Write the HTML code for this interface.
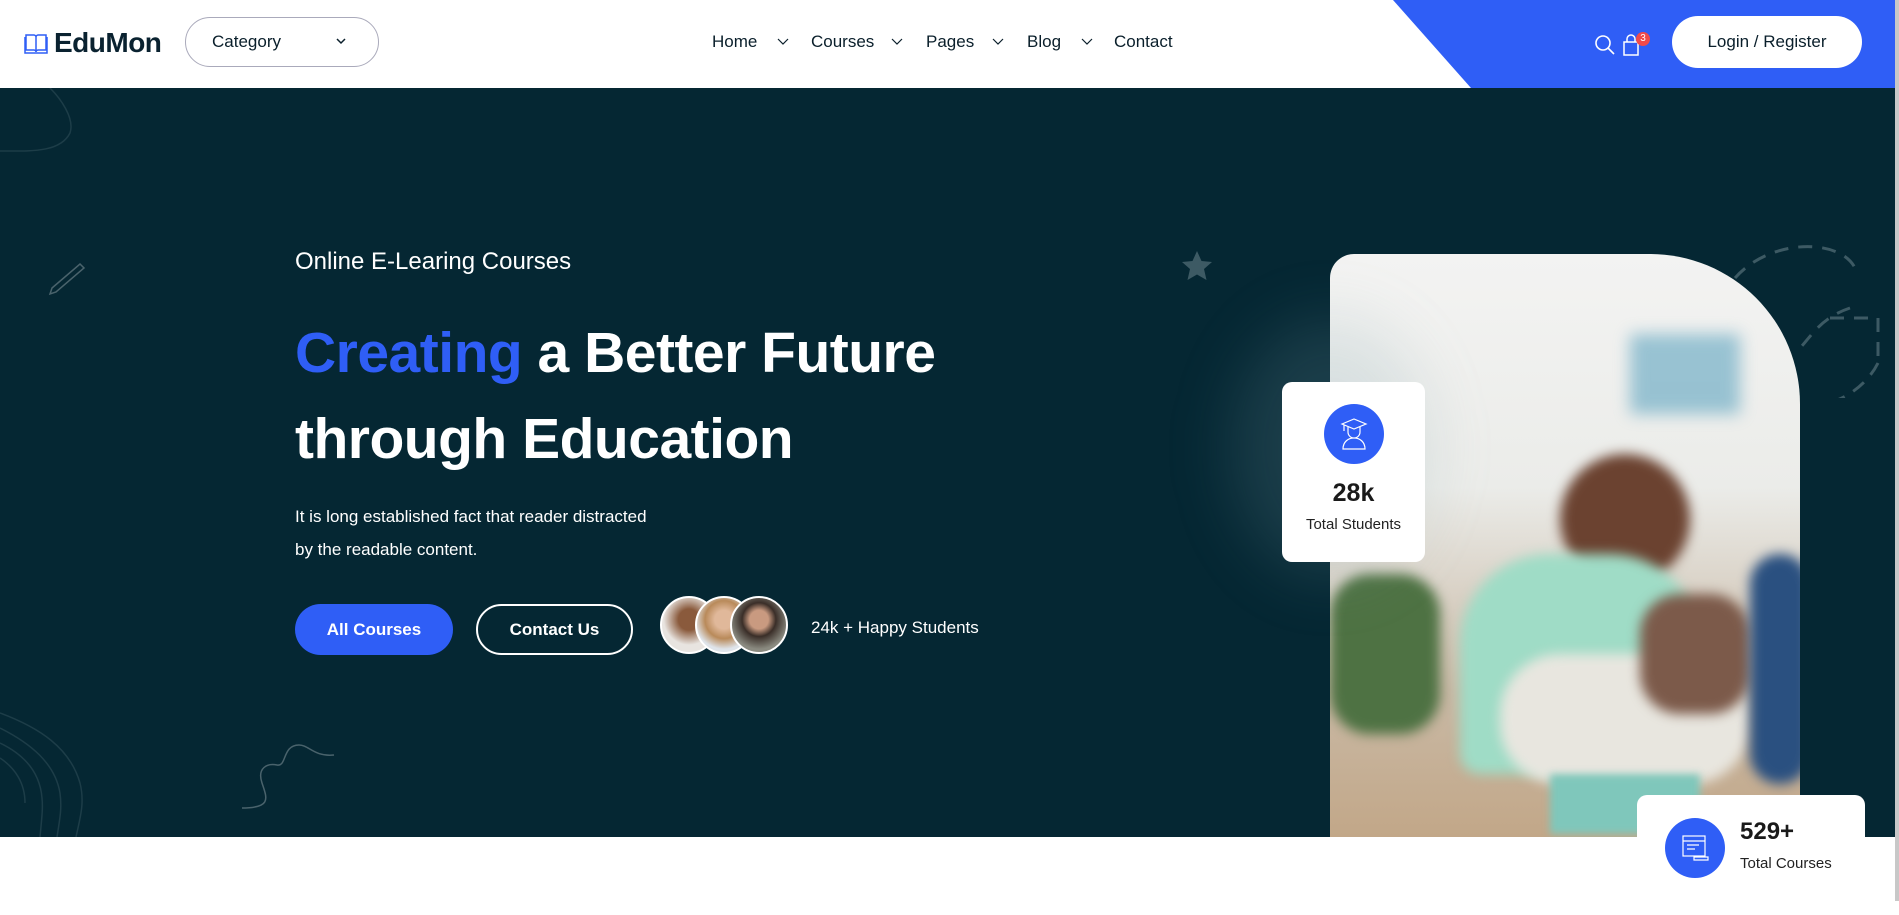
<!DOCTYPE html>
<html><head><meta charset="utf-8"><style>
*{margin:0;padding:0;box-sizing:border-box}
body{width:1899px;height:901px;overflow:hidden;background:#fff;font-family:"Liberation Sans",sans-serif;position:relative}
.nav{position:absolute;left:0;top:0;width:1899px;height:88px;background:#fff}
.blue{position:absolute;left:1393px;top:0;width:506px;height:88px;background:#2f5ef6;clip-path:polygon(0 0,100% 0,100% 100%,78px 100%)}
.abs{position:absolute}
.navi{position:absolute;top:32px;font-size:17px;color:#0a1f2b}
.hero{position:absolute;left:0;top:88px;width:1895px;height:749px;background:#052733;overflow:hidden}
.sb{position:absolute;right:0;top:0;width:4px;height:901px;background:#c8c8c8}
.btn{position:absolute;border-radius:26px;font-weight:bold;font-size:17px;color:#fff;display:flex;align-items:center;justify-content:center}
.card{position:absolute;background:#fff;border-radius:10px}
.circ{border-radius:50%;background:#2f5ef6;position:absolute}
</style></head><body>
<div class="nav">
  <svg class="abs" style="left:24px;top:32px" width="24" height="22" viewBox="0 0 24 22"><path d="M2 3h8c1 0 2 1 2 2v15c0-1-1-2-2-2H2zM22 3h-8c-1 0-2 1-2 2v15c0-1 1-2 2-2h8zM1 5v16h22V5" fill="none" stroke="#2f5ef6" stroke-width="1.5"/></svg>
  <div class="abs" style="left:54px;top:27px;font-size:28px;color:#0a2230;font-weight:bold;letter-spacing:-0.5px">EduMon</div>
  <div class="abs" style="left:185px;top:17px;width:194px;height:50px;border:1px solid #aab;border-radius:25px"></div>
  <div class="abs" style="left:212px;top:32px;font-size:17px;color:#0a1f2b">Category</div>
  <svg class="abs" style="left:336px;top:38px" width="10" height="7"><path d="M1 1l4 4 4-4" fill="none" stroke="#0a1f2b" stroke-width="1.5"/></svg>
  <div class="navi" style="left:712px">Home</div>
  <div class="navi" style="left:811px">Courses</div>
  <div class="navi" style="left:926px">Pages</div>
  <div class="navi" style="left:1027px">Blog</div>
  <div class="navi" style="left:1114px">Contact</div>
  <svg class="abs" style="left:777px;top:38px" width="12" height="7"><path d="M1 1l5 5 5-5" fill="none" stroke="#0a1f2b" stroke-width="1.2"/></svg>
  <svg class="abs" style="left:891px;top:38px" width="12" height="7"><path d="M1 1l5 5 5-5" fill="none" stroke="#0a1f2b" stroke-width="1.2"/></svg>
  <svg class="abs" style="left:992px;top:38px" width="12" height="7"><path d="M1 1l5 5 5-5" fill="none" stroke="#0a1f2b" stroke-width="1.2"/></svg>
  <svg class="abs" style="left:1081px;top:38px" width="12" height="7"><path d="M1 1l5 5 5-5" fill="none" stroke="#0a1f2b" stroke-width="1.2"/></svg>
  <div class="blue"></div>
  <svg class="abs" style="left:1595px;top:35px" width="20" height="20"><circle cx="8" cy="8" r="7" fill="none" stroke="#fff" stroke-width="1.6"/><path d="M13 13l6 6" stroke="#fff" stroke-width="1.6"/></svg>
  <svg class="abs" style="left:1622px;top:34px" width="18" height="22"><path d="M2 8h14v13H2zM5 8V5a4 4 0 0 1 8 0v3" fill="none" stroke="#fff" stroke-width="1.5"/></svg>
  <div class="abs" style="left:1636px;top:32px;width:14px;height:14px;border-radius:50%;background:#f04a4a;color:#fff;font-size:10px;text-align:center;line-height:14px">3</div>
  <div class="abs" style="left:1672px;top:16px;width:190px;height:52px;border-radius:26px;background:#fff;font-size:17px;color:#0a1f2b;text-align:center;line-height:52px">Login / Register</div>
</div>
<div class="hero">
  <svg class="abs" style="left:0;top:0" width="400" height="749" fill="none" stroke="#1d3d48" stroke-width="1.5">
    <path d="M50 0c10 10 25 30 20 45-10 20-40 18-70 18"/>
    <path d="M52 200l28-24 4 4-28 24-6 2z" stroke="#4a636c"/>
    <path d="M0 625c40 15 70 35 80 70 5 20 0 35-4 54M0 640c30 15 55 35 60 65 2 15 0 25-3 44M0 655c25 12 40 30 42 55 1 10 0 18-2 39M0 670c15 10 25 25 25 45"/>
    <path d="M242 720c30 0 25-10 20-25-5-15 5-20 15-18 10 2 5-20 22-20 10 0 15 12 35 10" stroke="#4a636c"/>
  </svg>
  <svg class="abs" style="left:1180px;top:162px" width="34" height="32"><path d="M17 1l4.5 10 10.5 1-8 7 2.5 11L17 24.5 7.5 30 10 19 2 12l10.5-1z" fill="#3d5a64"/></svg>
  <svg class="abs" style="left:1730px;top:150px" width="150" height="160" fill="none" stroke="#3d5a64" stroke-width="3" stroke-dasharray="14 10"><path d="M5 40C40 0 110 0 125 30"/><path d="M100 80h48v40"/><path d="M120 70C90 80 80 100 70 110"/><path d="M148 125c-10 20-30 35-50 40"/></svg>
  <div class="abs" style="left:295px;top:160px;font-size:24px;color:#fff;font-weight:500">Online E-Learing Courses</div>
  <div class="abs" style="left:295px;top:222px;font-size:57px;line-height:86px;color:#fff;font-weight:bold;letter-spacing:-0.5px"><span style="color:#2f5ef6">Creating</span> a Better Future<br>through Education</div>
  <div class="abs" style="left:295px;top:412px;font-size:17px;line-height:33px;color:#fff">It is long established fact that reader distracted<br>by the readable content.</div>
  <div class="btn" style="left:295px;top:516px;width:158px;height:51px;background:#2f5ef6">All Courses</div>
  <div class="btn" style="left:476px;top:516px;width:157px;height:51px;border:2px solid #fff">Contact Us</div>
  <div class="abs" style="left:660px;top:508px;width:58px;height:58px;border-radius:50%;border:2px solid #fff;background:radial-gradient(circle at 50% 40%,#8a5a3c 25%,#e8e4e0 60%)"></div>
  <div class="abs" style="left:695px;top:508px;width:58px;height:58px;border-radius:50%;border:2px solid #fff;background:radial-gradient(circle at 50% 40%,#e0b89a 22%,#b98a5a 45%,#dfe4ea 70%)"></div>
  <div class="abs" style="left:730px;top:508px;width:58px;height:58px;border-radius:50%;border:2px solid #fff;background:radial-gradient(circle at 50% 40%,#c99a80 22%,#3a2e28 40%,#8a8a80 70%)"></div>
  <div class="abs" style="left:811px;top:530px;font-size:17px;color:#fff">24k + Happy Students</div>
  <div class="abs" style="left:1330px;top:166px;width:470px;height:583px;border-radius:24px 150px 0 0;overflow:hidden;background:linear-gradient(180deg,#f3f3f2 0%,#ebece9 40%,#c9b9a5 75%,#c2a788 100%)">
    <div class="abs" style="left:230px;top:200px;width:130px;height:130px;border-radius:50%;background:#6b4230;filter:blur(6px)"></div>
    <div class="abs" style="left:130px;top:300px;width:240px;height:220px;border-radius:90px 90px 20px 20px;background:#9fdcc6;filter:blur(6px)"></div>
    <div class="abs" style="left:170px;top:400px;width:250px;height:130px;border-radius:60px;background:#e8e6df;filter:blur(6px)"></div>
    <div class="abs" style="left:0;top:320px;width:110px;height:160px;border-radius:40px;background:#4e7243;filter:blur(6px)"></div>
    <div class="abs" style="left:310px;top:340px;width:110px;height:120px;border-radius:40px;background:#7c5a4a;filter:blur(6px)"></div>
    <div class="abs" style="left:420px;top:300px;width:60px;height:230px;border-radius:30px;background:#2a5080;filter:blur(6px)"></div>
    <div class="abs" style="left:300px;top:80px;width:110px;height:80px;background:#5ea4c0;filter:blur(8px);opacity:.6"></div>
    <div class="abs" style="left:220px;top:520px;width:150px;height:60px;background:#7fc7bb;filter:blur(4px)"></div>
  </div>
  <div class="abs" style="left:1230px;top:230px;width:200px;height:260px;border-radius:50%;background:rgba(120,160,170,.18);filter:blur(30px)"></div>
</div>
<div class="card" style="left:1282px;top:382px;width:143px;height:180px">
  <div class="circ" style="left:42px;top:22px;width:60px;height:60px"></div>
  <svg class="abs" style="left:58px;top:36px" width="28" height="32" fill="none" stroke="#fff" stroke-width="1.2"><path d="M2 6l12-5 12 5-12 5z"/><path d="M8 9v5a6 6 0 0 0 12 0V9M4 7v6M3 31c0-7 5-11 11-11s11 4 11 11z"/></svg>
  <div class="abs" style="left:0;width:143px;top:97px;text-align:center;font-size:25px;font-weight:bold;color:#1a1a1a">28k</div>
  <div class="abs" style="left:0;width:143px;top:134px;text-align:center;font-size:15px;color:#222">Total Students</div>
</div>
<div class="card" style="left:1637px;top:795px;width:228px;height:120px">
  <div class="circ" style="left:28px;top:23px;width:60px;height:60px"></div>
  <svg class="abs" style="left:45px;top:40px" width="28" height="26" fill="none" stroke="#fff" stroke-width="1.2"><rect x="1" y="1" width="22" height="20"/><path d="M1 6h22M5 10h12M5 14h8M12 22h14v3H12z"/></svg>
  <div class="abs" style="left:103px;top:23px;font-size:24px;font-weight:bold;color:#1a1a1a">529+</div>
  <div class="abs" style="left:103px;top:60px;font-size:15px;color:#222">Total Courses</div>
</div>
<div class="sb"></div>
</body></html>
